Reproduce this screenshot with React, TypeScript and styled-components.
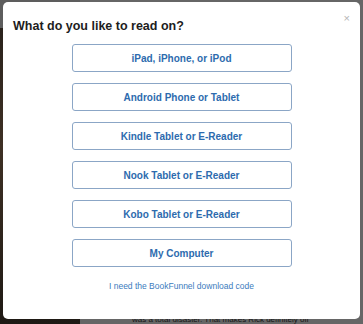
import React from "react";
import styled, {createGlobalStyle} from "styled-components";

const GlobalStyle = createGlobalStyle`
  html, body {
    margin: 0;
    padding: 0;
    background: #5d5d5d;
    font-family: "Liberation Sans", Arial, sans-serif;
  }
`

const options = [
    "iPad, iPhone, or iPod",
    "Android Phone or Tablet",
    "Kindle Tablet or E-Reader",
    "Nook Tablet or E-Reader",
    "Kobo Tablet or E-Reader",
    "My Computer",
]

const App = () => {
    return (
        <>
            <GlobalStyle/>
            <Page>
                <Photo/>
                <Article>
                    <p>was a total disaster. That makes Rick definitely off</p>
                </Article>
            </Page>
            <Modal>
                <Close aria-label="close">×</Close>
                <Title>What do you like to read on?</Title>
                <Options>
                    {options.map(o => (
                        <Choice key={o}>{o}</Choice>
                    ))}
                </Options>
                <CodeLink href="#">I need the BookFunnel download code</CodeLink>
            </Modal>
        </>
    );
}

const Page = styled.div`
  display: flex;
  height: 324px;
  width: 363px;
  overflow: hidden;
  background: #5d5d5d;
`

const Photo = styled.div`
  width: 80px;
  flex-shrink: 0;
  margin-top: 28px;
  background: linear-gradient(180deg, #2a221c 0%, #3e3024 40%, #1e1914 100%);
`

const Article = styled.div`
  flex: 1;
  display: flex;
  flex-direction: column;
  justify-content: flex-end;
  background: #666;

  p {
    margin: 0 0 0 52px;
    font-size: 8px;
    line-height: 8px;
    color: #151515;
    white-space: nowrap;
  }
`

const Modal = styled.div`
  position: fixed;
  left: 3px;
  top: 2px;
  width: 357px;
  height: 317px;
  box-sizing: border-box;
  background: #fff;
  border-radius: 5px;
  padding: 17px 0 0;
  display: flex;
  flex-direction: column;
`

const Close = styled.button`
  position: absolute;
  top: 10px;
  right: 10px;
  border: none;
  background: none;
  padding: 0;
  font-size: 11px;
  line-height: 12px;
  color: #b5b5b5;
  font-family: "Liberation Sans", Arial, sans-serif;
`

const Title = styled.h2`
  margin: 0 0 0 10px;
  font-size: 12.5px;
  line-height: 15px;
  font-weight: bold;
  color: #1d1d1d;
`

const Options = styled.div`
  display: flex;
  flex-direction: column;
  align-items: center;
  gap: 11px;
  margin-top: 10px;
`

const Choice = styled.button`
  width: 220px;
  height: 28px;
  box-sizing: border-box;
  border: 1px solid #8ba6c6;
  border-radius: 3px;
  background: #fff;
  color: #2d6bae;
  font-family: "Liberation Sans", Arial, sans-serif;
  font-size: 10px;
  font-weight: bold;
  padding: 0;
`

const CodeLink = styled.a`
  align-self: center;
  margin-top: 14px;
  font-size: 8.5px;
  line-height: 10px;
  color: #3b7bbd;
  text-decoration: none;
`

export default App;
